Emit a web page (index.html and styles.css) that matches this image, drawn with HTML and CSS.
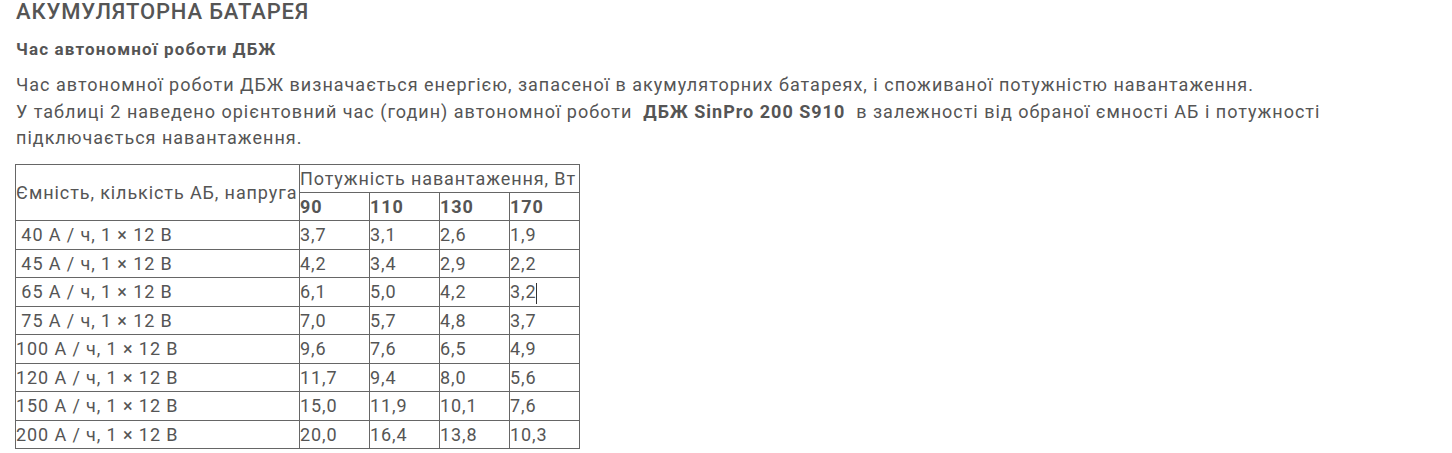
FILE: index.html
```html
<!DOCTYPE html>
<html lang="uk">
<head>
<meta charset="utf-8">
<link rel="stylesheet" href="styles.css">
</head>
<body>
<div class="content">
  <h2 class="title">АКУМУЛЯТОРНА БАТАРЕЯ</h2>
  <h3 class="subtitle">Час автономної роботи ДБЖ</h3>
  <p class="text">Час автономної роботи ДБЖ визначається енергією, запасеної в акумуляторних батареях, і споживаної потужністю навантаження.<br>У таблиці 2 наведено орієнтовний час (годин) автономної роботи &nbsp;<b>ДБЖ SinPro 200 S910</b>&nbsp; в залежності від обраної ємності АБ і потужності підключається навантаження.</p>
  <table class="runtime">
    <colgroup>
      <col class="c-first"><col class="c-num"><col class="c-num"><col class="c-num"><col class="c-num">
    </colgroup>
    <tr class="top"><td rowspan="2" class="label">Ємність, кількість АБ, напруга</td><td colspan="4" class="power">Потужність навантаження, Вт</td></tr>
    <tr class="head"><td>90</td><td>110</td><td>130</td><td>170</td></tr>
    <tr><td>&nbsp;40 А / ч, 1 × 12 В</td><td>3,7</td><td>3,1</td><td>2,6</td><td>1,9</td></tr>
    <tr><td>&nbsp;45 А / ч, 1 × 12 В</td><td>4,2</td><td>3,4</td><td>2,9</td><td>2,2</td></tr>
    <tr><td>&nbsp;65 А / ч, 1 × 12 В</td><td>6,1</td><td>5,0</td><td>4,2</td><td>3,2<span class="caret"></span></td></tr>
    <tr><td>&nbsp;75 А / ч, 1 × 12 В</td><td>7,0</td><td>5,7</td><td>4,8</td><td>3,7</td></tr>
    <tr><td>100 А / ч, 1 × 12 В</td><td>9,6</td><td>7,6</td><td>6,5</td><td>4,9</td></tr>
    <tr><td>120 А / ч, 1 × 12 В</td><td>11,7</td><td>9,4</td><td>8,0</td><td>5,6</td></tr>
    <tr><td>150 А / ч, 1 × 12 В</td><td>15,0</td><td>11,9</td><td>10,1</td><td>7,6</td></tr>
    <tr><td>200 А / ч, 1 × 12 В</td><td>20,0</td><td>16,4</td><td>13,8</td><td>10,3</td></tr>
  </table>
</div>
</body>
</html>
```
FILE: styles.css
```css
html, body {
  margin: 0;
  padding: 0;
  background: #fff;
}
body {
  font-family: Roboto, "Noto Sans", sans-serif;
  color: #555;
}
.content {
  padding: 0 15px 0 16px;
}
.title {
  margin: 0;
  font-size: 22px;
  font-weight: 500;
  letter-spacing: 0.85px;
  line-height: 24px;
  color: #555;
}
.subtitle {
  margin: 14px 0 0;
  font-size: 17px;
  font-weight: 700;
  letter-spacing: 1.15px;
  line-height: 22px;
}
.text {
  margin: 12px 0 0;
  max-width: 1390px;
  font-size: 18px;
  letter-spacing: 1px;
  line-height: 26.5px;
}
.text b {
  font-weight: 700;
}
.runtime {
  margin: 12px 0 0 -1px;
  border-collapse: collapse;
  table-layout: fixed;
  width: 565px;
  font-size: 18px;
  letter-spacing: 0.9px;
}
.c-first { width: 284px; }
.c-num { width: 70px; }
.runtime td {
  border: 1px solid #666;
  padding: 0;
  height: 27.5px;
  line-height: 27.5px;
  white-space: nowrap;
  vertical-align: middle;
}
.runtime .top td {
  height: 27px;
  line-height: 27px;
}
.runtime .head td {
  font-weight: 700;
}
.caret {
  display: inline-block;
  width: 1px;
  height: 21px;
  background: #333;
  vertical-align: middle;
}
```
